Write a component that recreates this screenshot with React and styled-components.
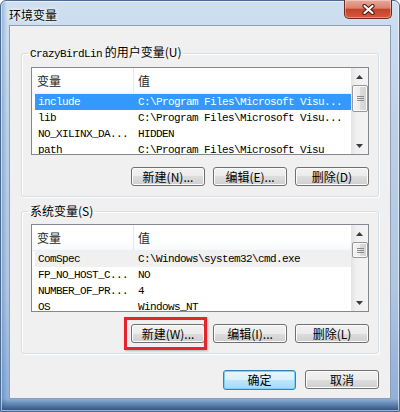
import React from 'react'
import styled, { createGlobalStyle } from 'styled-components'

const GlobalStyle = createGlobalStyle`
  html, body {
    margin: 0;
    padding: 0;
    background: #fff;
  }
  body {
    font-family: "Noto Sans CJK SC", "Liberation Sans", sans-serif;
    font-size: 12px;
    color: #000;
  }
`

const userVars = [
  { name: 'include', value: 'C:\\Program Files\\Microsoft Visu...', state: 'selected' },
  { name: 'lib', value: 'C:\\Program Files\\Microsoft Visu...' },
  { name: 'NO_XILINX_DA...', value: 'HIDDEN' },
  { name: 'path', value: 'C:\\Program Files\\Microsoft Visu' },
]

const systemVars = [
  { name: 'ComSpec', value: 'C:\\Windows\\system32\\cmd.exe', state: 'focused' },
  { name: 'FP_NO_HOST_C...', value: 'NO' },
  { name: 'NUMBER_OF_PR...', value: '4' },
  { name: 'OS', value: 'Windows_NT' },
]

const Arrow = ({ down }) => (
  <svg width="7" height="4" viewBox="0 0 7 4">
    <path d={down ? 'M0 0h7L3.5 4z' : 'M0 4h7L3.5 0z'} fill="#3b3b3b" />
  </svg>
)

const VarList = ({ rows, thumb }) => (
  <List>
    <ListMain>
      <Header>
        <HeaderCell>变量</HeaderCell>
        <HeaderCell>值</HeaderCell>
      </Header>
      <Rows>
        {rows.map((r) => (
          <Row key={r.name} state={r.state}>
            <Cell>{r.name}</Cell>
            <Cell>{r.value}</Cell>
          </Row>
        ))}
      </Rows>
    </ListMain>
    <Scrollbar>
      <ScrollArrow><Arrow /></ScrollArrow>
      <Track>
        <Thumb size={thumb}>
          <Grip />
        </Thumb>
      </Track>
      <ScrollArrow><Arrow down /></ScrollArrow>
    </Scrollbar>
  </List>
)

const App = () => {
  return (
    <>
      <GlobalStyle />
      <Window>
        <TitleBar>
          <Title>环境变量</Title>
          <CloseButton>
            <svg width="13" height="11" viewBox="0 0 13 11">
              <path d="M2.5 2l8 7M10.5 2l-8 7" stroke="#4a1810" strokeWidth="4.2" strokeLinecap="round" />
              <path d="M2.5 2l8 7M10.5 2l-8 7" stroke="#fff" strokeWidth="2.2" strokeLinecap="round" />
            </svg>
          </CloseButton>
        </TitleBar>
        <Client>
          <Group>
            <Legend><Mono>CrazyBirdLin</Mono> 的用户变量(U)</Legend>
            <VarList rows={userVars} thumb={27} />
            <ButtonRow>
              <Button>新建(N)...</Button>
              <Button>编辑(E)...</Button>
              <Button>删除(D)</Button>
            </ButtonRow>
          </Group>
          <Group>
            <Legend>系统变量(S)</Legend>
            <VarList rows={systemVars} thumb={16} />
            <ButtonRow>
              <Highlight>
                <Button>新建(W)...</Button>
              </Highlight>
              <Button>编辑(I)...</Button>
              <Button>删除(L)</Button>
            </ButtonRow>
          </Group>
          <DialogButtons>
            <Button primary>确定</Button>
            <Button>取消</Button>
          </DialogButtons>
        </Client>
      </Window>
    </>
  )
}

const Window = styled.div`
  width: 400px;
  height: 412px;
  box-sizing: border-box;
  display: flex;
  flex-direction: column;
  padding: 0 8px 12px 8px;
  border: 1px solid #4a6a94;
  border-radius: 6px 6px 0 0;
  background:
    linear-gradient(to right, rgba(40, 90, 160, 0.35) 0px, rgba(40, 90, 160, 0) 6px),
    linear-gradient(to bottom, #cfdff0 0%, #bcd1e8 30%, #aec7e3 70%, #8fb0d8 97%, #2c4f80 100%);
  box-shadow: inset 0 0 0 1px rgba(255, 255, 255, 0.55);
`

const TitleBar = styled.div`
  height: 29px;
  display: flex;
  justify-content: space-between;
  align-items: flex-start;
  margin-right: -1px;
`

const Title = styled.div`
  padding-top: 7px;
  line-height: 14px;
  font-size: 12px;
  text-shadow: 0 0 6px #fff, 0 0 3px #fff;
`

const CloseButton = styled.div`
  width: 48px;
  height: 19px;
  box-sizing: border-box;
  margin-top: -1px;
  display: flex;
  align-items: center;
  justify-content: center;
  border: 1px solid #6e2a20;
  border-top: none;
  border-radius: 0 0 5px 5px;
  background: linear-gradient(#e9a999 0%, #d9826e 45%, #c4412b 52%, #d35a3c 100%);
  box-shadow: inset 0 0 0 1px rgba(255, 255, 255, 0.35);
`

const Client = styled.div`
  flex: 1;
  display: flex;
  flex-direction: column;
  padding: 19px 11px 8px 11px;
  background: #f0f0f0;
  border: 1px solid #8c9eb8;
`

const Group = styled.fieldset`
  margin: 0 0 7px 0;
  padding: 6px 9px 10px 9px;
  border: 1px solid #d5dfe5;
  border-radius: 3px;
  box-shadow: inset 1px 1px 0 #fff, 1px 1px 0 #fff;
  min-width: 0;
`

const Legend = styled.legend`
  padding: 0 2px;
  margin-left: -3px;
  line-height: 14px;
  font-size: 12px;
`

const Mono = styled.span`
  font-family: "Liberation Mono", monospace;
  font-size: 11px;
  letter-spacing: -0.6px;
`

const List = styled.div`
  height: 88px;
  box-sizing: border-box;
  display: flex;
  border: 1px solid #828790;
  background: #fff;
  overflow: hidden;
`

const ListMain = styled.div`
  flex: 1;
  min-width: 0;
  display: flex;
  flex-direction: column;
`

const Header = styled.div`
  height: 26px;
  flex: none;
  display: grid;
  grid-template-columns: 101px 1fr;
  background: linear-gradient(#ffffff 0%, #ffffff 60%, #f7f8fa 100%);
  border-bottom: 1px solid #eceff3;
  box-sizing: border-box;
`

const HeaderCell = styled.div`
  display: flex;
  align-items: center;
  padding-left: 5px;
  font-size: 12px;
  color: #1e1e1e;
  & + & {
    border-left: 1px solid #e3e8ee;
    padding-left: 4px;
  }
`

const Rows = styled.div`
  flex: 1;
  overflow: hidden;
`

const Row = styled.div`
  height: 16px;
  margin-left: 3px;
  display: grid;
  grid-template-columns: 99px 1fr;
  align-items: center;
  background: ${(p) => (p.state === 'selected' ? '#3399ff' : p.state === 'focused' ? '#f0f0f0' : 'transparent')};
  color: ${(p) => (p.state === 'selected' ? '#fff' : '#000')};
`

const Cell = styled.div`
  font-family: "Liberation Mono", monospace;
  font-size: 11px;
  letter-spacing: -0.6px;
  white-space: nowrap;
  overflow: hidden;
  padding-left: 3px;
  & + & {
    padding-left: 4px;
  }
`

const Scrollbar = styled.div`
  width: 17px;
  flex: none;
  display: flex;
  flex-direction: column;
  background: linear-gradient(to right, #e3e3e3 0%, #f0f0f0 30%, #f4f4f4 100%);
`

const ScrollArrow = styled.div`
  height: 17px;
  flex: none;
  display: flex;
  align-items: center;
  justify-content: center;
`

const Track = styled.div`
  flex: 1;
  display: flex;
  flex-direction: column;
`

const Thumb = styled.div`
  height: ${(p) => p.size}px;
  margin: 0 0 0 1px;
  box-sizing: border-box;
  border: 1px solid #979797;
  border-radius: 2px;
  background: linear-gradient(to right, #f3f3f3 0%, #ececec 50%, #dcdcdc 51%, #d2d2d2 100%);
  box-shadow: inset 0 0 0 1px #fafafa;
  display: flex;
  align-items: center;
  justify-content: center;
`

const Grip = styled.div`
  width: 7px;
  height: 5px;
  background: repeating-linear-gradient(#8a8a8a 0 1px, transparent 1px 2px);
`

const ButtonRow = styled.div`
  margin-top: 12px;
  display: flex;
  justify-content: flex-end;
  gap: 8px;
`

const Button = styled.div`
  width: ${(p) => (p.primary ? 73 : 74)}px;
  height: ${(p) => (p.primary ? 20 : 19)}px;
  box-sizing: border-box;
  display: flex;
  align-items: center;
  justify-content: center;
  font-size: 12px;
  line-height: 1;
  border: 1px solid ${(p) => (p.primary ? '#3c7fb1' : '#707070')};
  border-radius: 3px;
  background: ${(p) =>
    p.primary
      ? 'linear-gradient(#eaf6fd 0%, #d9f0fc 50%, #bee6fd 50%, #a7d9f5 100%)'
      : 'linear-gradient(#f2f2f2 0%, #ebebeb 50%, #dddddd 50%, #cfcfcf 100%)'};
  box-shadow: inset 0 0 0 1px ${(p) => (p.primary ? '#7fd0f5' : '#fcfcfc')};
`

const Highlight = styled.div`
  position: relative;
  &::after {
    content: '';
    position: absolute;
    top: -7px;
    bottom: -7px;
    left: -7px;
    right: -2px;
    border: 3px solid #e2262b;
    box-shadow: 1px 1px 2px rgba(0, 0, 0, 0.25);
    pointer-events: none;
  }
`

const DialogButtons = styled.div`
  margin-top: 9px;
  display: flex;
  justify-content: flex-end;
  gap: 9px;
`

export default App
